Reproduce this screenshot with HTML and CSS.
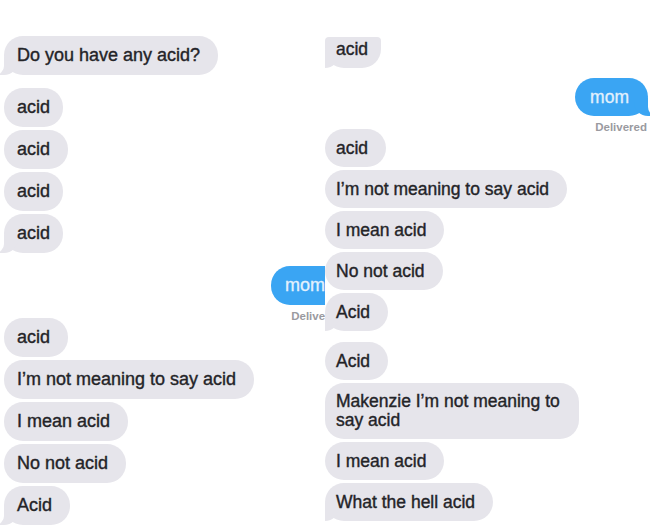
FILE: index.html
```html
<!DOCTYPE html>
<html lang="en">
<head>
<meta charset="utf-8">
<title>acid</title>
<link rel="stylesheet" href="styles.css">
</head>
<body>
<main class="screens">
  <section class="panel panel-left">
    <div class="group">
      <div class="bubble in tail">Do you have any acid?</div>
    </div>
    <div class="group group-gap">
      <div class="bubble in narrow">acid</div>
      <div class="bubble in">acid</div>
      <div class="bubble in narrow">acid</div>
      <div class="bubble in narrow tail">acid</div>
    </div>
    <div class="group group-gap out-group">
      <div class="bubble out tail-out">mom</div>
      <div class="status">Delivered</div>
    </div>
    <div class="group">
      <div class="bubble in">acid</div>
      <div class="bubble in">I’m not meaning to say acid</div>
      <div class="bubble in">I mean acid</div>
      <div class="bubble in">No not acid</div>
      <div class="bubble in tail">Acid</div>
    </div>
  </section>

  <section class="panel panel-right">
    <div class="group">
      <div class="bubble in narrow cut tail">acid</div>
    </div>
    <div class="group group-gap-sm out-group">
      <div class="bubble out tail-out">mom</div>
      <div class="status">Delivered</div>
    </div>
    <div class="group">
      <div class="bubble in">acid</div>
      <div class="bubble in">I’m not meaning to say acid</div>
      <div class="bubble in">I mean acid</div>
      <div class="bubble in">No not acid</div>
      <div class="bubble in tail">Acid</div>
    </div>
    <div class="group group-gap-sm">
      <div class="bubble in">Acid</div>
      <div class="bubble in multi">Makenzie I’m not meaning to say acid</div>
      <div class="bubble in">I mean acid</div>
      <div class="bubble in tail">What the hell acid</div>
    </div>
  </section>
</main>
</body>
</html>
```

FILE: styles.css
```css
* {
  box-sizing: border-box;
}

html,
body {
  margin: 0;
  padding: 0;
  background: #ffffff;
}

body {
  width: 650px;
  height: 531px;
  overflow: hidden;
  font-family: "Liberation Sans", Arial, sans-serif;
  color: #222226;
}

.screens {
  display: flex;
  width: 650px;
  height: 531px;
}

.panel {
  display: flex;
  flex-direction: column;
  overflow: hidden;
  background: #ffffff;
  flex: none;
}

.panel-left {
  width: 325px;
  padding-top: 36px;
}

.panel-left .group {
  width: 345px;
  padding-left: 4px;
}

.panel-right {
  width: 325px;
  padding-top: 37px;
  padding-right: 2px;
}

.group {
  display: flex;
  flex-direction: column;
  align-items: flex-start;
  gap: 3px;
}

.group-gap {
  margin-top: 13px;
}

.group-gap-sm {
  margin-top: 11px;
}

.panel-right .group-gap-sm.out-group {
  margin-top: 10px;
}

.out-group {
  align-items: flex-end;
  gap: 0;
}

.bubble {
  position: relative;
  isolation: isolate;
  border-radius: 19px;
  white-space: nowrap;
}

.panel-left .bubble {
  font-size: 18px;
  line-height: 21px;
  padding: 9px 18px 9px 13px;
}

.panel-right .bubble {
  font-size: 17.5px;
  line-height: 20px;
  padding: 9px 18px 9px 11px;
}

.bubble.in {
  background: #e6e5eb;
  color: #222226;
  -webkit-text-stroke: 0.4px #2a2a2e;
}

.panel-left .bubble.narrow {
  padding-right: 13px;
}

.panel-right .bubble.narrow {
  padding-right: 13px;
}

.panel-right .bubble.cut {
  padding-top: 2px;
  padding-bottom: 9px;
  border-top-left-radius: 4px;
  border-top-right-radius: 4px;
}

.panel-right .bubble.multi {
  white-space: normal;
  max-width: 254px;
  line-height: 19px;
}

.bubble.out {
  background: #3aa5f3;
  color: #e3f1fd;
  -webkit-text-stroke: 0.3px #e3f1fd;
}

.panel-left .bubble.out {
  padding: 9px 20px 9px 14px;
  font-size: 18px;
}

.panel-right .bubble.out {
  padding: 9px 19px 9px 15px;
  font-size: 17.5px;
}

.status {
  margin-top: 5px;
  margin-bottom: -4px;
  margin-right: 1px;
  font-size: 11.5px;
  line-height: 12px;
  font-weight: bold;
  color: #9a9a9f;
}

.panel-left .status {
  margin-right: 2px;
}

/* incoming tail (bottom-left) */
.tail::before {
  content: "";
  position: absolute;
  z-index: -1;
  bottom: 0;
  left: -6px;
  width: 20px;
  height: 18px;
  background: #e6e5eb;
  border-bottom-right-radius: 14px;
}

.tail::after {
  content: "";
  position: absolute;
  z-index: -1;
  bottom: 0;
  left: -10px;
  width: 10px;
  height: 18px;
  background: #ffffff;
  border-bottom-right-radius: 9px;
}

/* outgoing tail (bottom-right) */
.tail-out::before {
  content: "";
  position: absolute;
  z-index: -1;
  bottom: 0;
  right: -6px;
  width: 20px;
  height: 18px;
  background: #3aa5f3;
  border-bottom-left-radius: 14px;
}

.tail-out::after {
  content: "";
  position: absolute;
  z-index: -1;
  bottom: 0;
  right: -10px;
  width: 10px;
  height: 18px;
  background: #ffffff;
  border-bottom-left-radius: 9px;
}
```
